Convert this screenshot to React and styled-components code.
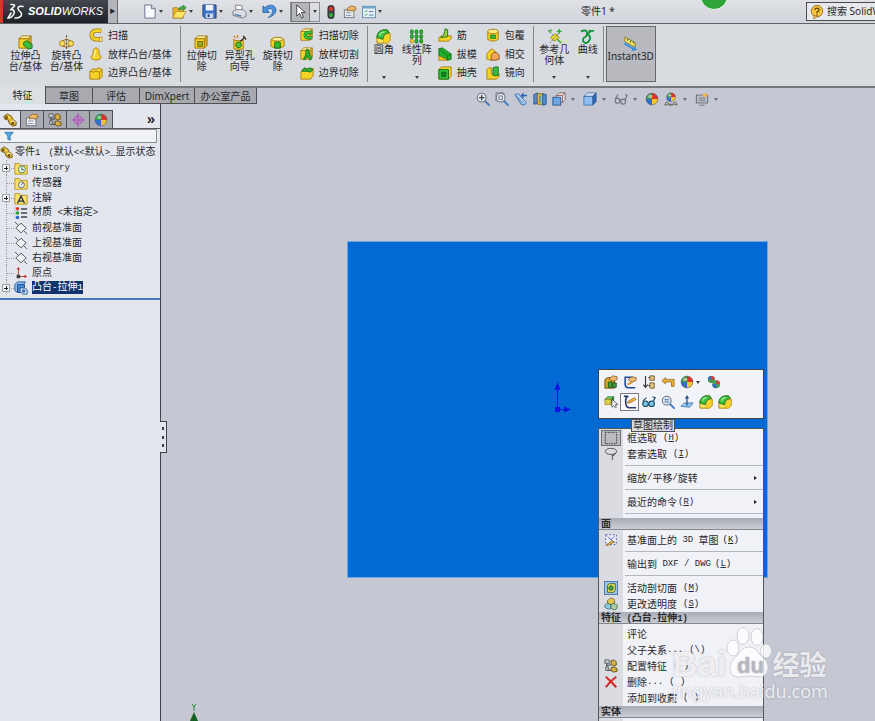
import React from 'react'
import styled, { createGlobalStyle, css } from 'styled-components'

const GlobalStyle = createGlobalStyle`
  * {
    box-sizing: border-box;
  }
  body {
    margin: 0;
    overflow: hidden;
    color: #26282c;
    font: 10px/11px "Noto Sans", "Noto Sans CJK SC", sans-serif;
  }
  button, input {
    margin: 0;
    padding: 0;
    border: 0;
    background: none;
    color: inherit;
    font: inherit;
  }
  ul {
    margin: 0;
    padding: 0;
    list-style: none;
  }
`

/* ---------- icons, all on a 16 x 16 grid ---------- */

const Y = '#f5d327'
const YD = '#a87a10'
const G = '#22b02c'
const GD = '#12701a'
const B = '#3f86cf'
const BD = '#20508f'

const box = (
  <g stroke={YD} strokeLinejoin="round">
    <path d="M1 4l3-3h10l-3 3z" fill="#fdf0a0" />
    <path d="M11 4l3-3v10l-3 3z" fill="#d9a81c" />
    <path d="M1 4h10v10H1z" fill={Y} />
  </g>
)
const ball = (
  <g>
    <path d="M8 8V1a7 7 0 0 0-7 7z" fill="#3d9a4a" />
    <path d="M8 8V1a7 7 0 0 1 7 7z" fill="#e0322c" />
    <path d="M8 8h7a7 7 0 0 1-7 7z" fill="#f1c531" />
    <path d="M8 8H1a7 7 0 0 0 7 7z" fill="#2f6fd0" />
    <circle cx="8" cy="8" r="6.7" fill="none" stroke="#5a5a60" strokeWidth=".7" />
    <ellipse cx="6" cy="5" rx="2.5" ry="1.8" fill="#fff" opacity=".5" />
  </g>
)
const lens = (
  <g>
    <path d="M10 10l5 5" stroke="#4b82bd" strokeWidth="2.4" strokeLinecap="round" />
    <circle cx="6.5" cy="6.5" r="5" fill="#dfe8f2" stroke="#6d7480" strokeWidth="1.2" />
  </g>
)
const folder = (
  <path d="M1 3h5l1 2h8v10H1z" fill="#fbe46a" stroke="#b58a1a" strokeLinejoin="round" />
)
const fillet = (
  <g strokeLinejoin="round">
    <path d="M1 8l4-6 3-1h4l3 4v7l-3 3H1z" fill="#fbe65c" stroke={YD} />
    <path d="M8 15V9l3-4h4v7l-3 3z" fill={Y} stroke="#c79c1c" strokeWidth=".7" />
    <path d="M1 9q0-7 7-8h4l2 3q-5 0-6 4l-1 3z" fill="#3cc441" stroke={GD} />
    <path d="M4 7q1-4 5-4" fill="none" stroke="#a5f09c" strokeWidth="1.300" />
  </g>
)
const plane = (
  <g fill="none" stroke="#4c4e55" strokeWidth="1">
    <path d="M8 2.500l6 5.500-6 5.500-6-5.500z" fill="#eef0f4" />
    <path d="M1 1l4 4M11 11l4 4" />
  </g>
)
const part = (
  <g stroke="#6d500b" strokeLinejoin="round">
    <path d="M1 4l4-3 5 3 1 3 4 3v4l-4 1-4-3-1-4-4-1z" fill="#e0b52c" />
    <path d="M5 4l3 1.500M9 10l3-1 2 2" stroke="#fff3a6" strokeWidth="1.400" />
    <circle cx="4" cy="5" r="1.300" fill="#7a5a0c" />
    <circle cx="11" cy="12" r="1.300" fill="#7a5a0c" />
  </g>
)
const hand = (
  <g>
    <rect x="1.500" y="5.500" width="11" height="9" fill="#e9ebef" stroke="#6d6f76" />
    <path d="M3.500 9h6M3.500 12h6" stroke="#7c8fb0" />
    <path d="M5 4l4-3 5 1 1 3-4 2-3-1-3 1z" fill="#eab765" stroke="#84531c" strokeWidth=".8" />
  </g>
)

const icons = {
  newDoc: (
    <g stroke="#66718a">
      <path d="M3 1h7l4 4v10H3z" fill="#f7faff" />
      <path d="M10 1v4h4" fill="#cfdcf0" />
    </g>
  ),
  open: (
    <g>
      <path d="M1 4h5l1 2h5v9H1z" fill="#e8b52c" stroke="#94690d" strokeWidth=".7" />
      <path d="M4 8h11l-4 7H1z" fill="#fde464" stroke="#a9801c" strokeWidth=".7" />
      <path d="M7 6q1-4 5-3V1l3 3-3 3V5q-2-1-3 1z" fill="#3cae3e" stroke={GD} strokeWidth=".6" />
    </g>
  ),
  save: (
    <g>
      <path d="M1 1h14v14H3l-2-2z" fill="#3c70c8" stroke="#1b3d7c" />
      <path d="M4 1h8v6H4z" fill="#eef3fb" />
      <path d="M4 10h8v5H4z" fill="#cfd8e8" />
      <path d="M6 11h2v3H6z" fill="#1b3d7c" />
    </g>
  ),
  print: (
    <g stroke="#63676f" strokeWidth=".8">
      <path d="M4 1l7 1-1 6-6-1z" fill="#fff" />
      <path d="M1 8l3-2h8l3 3v4l-4 2-10-3z" fill="#dcdee3" />
      <path d="M3 11l7 2" stroke="#3e7fc4" strokeWidth="1.500" />
    </g>
  ),
  undo: (
    <path
      d="M1 2v7h7L5.500 6.500Q10 3 11.500 7q.5 4-5 7.500Q15 12 15 6.500 14 0 7 1.500 5 2 3.500 4z"
      fill="#4a92dc"
      stroke="#205a9c"
      strokeWidth=".8"
    />
  ),
  cursor: <path d="M4 1v12l3-3 2 5 2-1-2-5h4z" fill="#fff" stroke="#3a3c42" />,
  traffic: (
    <g>
      <rect x="4.500" y=".5" width="7" height="15" rx="3" fill="#3f4146" stroke="#2a2b2e" />
      <circle cx="8" cy="4.500" r="2.400" fill="#e23328" />
      <circle cx="8" cy="11.500" r="2.400" fill="#2fae3a" />
    </g>
  ),
  hand,
  options: (
    <g>
      <rect x=".5" y="1.500" width="15" height="13" fill="#e6f0f8" stroke="#5d89ae" />
      <path d="M.5 3h15" stroke="#6ea4d0" strokeWidth="2" />
      <path d="M3 7l1 1 2-2M3 11l1 1 2-2" fill="none" stroke="#279137" />
      <path d="M8 7.500h5M8 11.500h5" stroke="#4f6f90" />
    </g>
  ),
  help: (
    <g>
      <circle cx="8" cy="7" r="6.500" fill="#f7c63a" stroke="#8e671a" />
      <path d="M5 12l-1 4 5-3z" fill="#f7c63a" stroke="#8e671a" strokeWidth=".7" />
      <path d="M5.500 5.500Q6 3.500 8 3.500t2.500 2Q10.500 7 8 8v1.500M8 10.500v1.500" fill="none" stroke="#5a3d08" strokeWidth="1.500" />
    </g>
  ),
  boss: (
    <g>
      {box}
      <path d="M6 8l3-2 6 4v4l-4 1-5-4z" fill="#41bd3e" stroke={GD} />
    </g>
  ),
  revolve: (
    <g fill="none" stroke={YD}>
      <path d="M8 0v16" stroke="#6f5a2a" strokeDasharray="3 1" />
      <ellipse cx="3.500" cy="9" rx="3" ry="3" fill="#f9dc62" />
      <ellipse cx="12.500" cy="9" rx="3" ry="3" fill="#f9dc62" />
      <path d="M4 6q4-3 8 0M4 12q4 2 8 0" stroke="#8d5c10" />
    </g>
  ),
  sweep: (
    <g fill="none">
      <path d="M14 3H8a5 5 0 0 0 0 10h6" stroke={YD} strokeWidth="5" />
      <path d="M13.500 3H8a5 5 0 0 0 0 10h5.500" stroke={Y} strokeWidth="3.200" />
      <path d="M12 10.500h3v5h-3z" fill="#fff1a0" stroke={YD} strokeWidth=".8" />
    </g>
  ),
  loft: (
    <g stroke={YD}>
      <path d="M5 3q3-4 6 0 0 6 3 9-2 3-6 3t-6-3q3-3 3-9z" fill={Y} />
      <path d="M7 3q0 6-2 9" stroke="#fff3a8" fill="none" strokeWidth="1.500" />
    </g>
  ),
  boundary: (
    <g stroke={YD} strokeLinejoin="round">
      <path d="M1 6l4-3 3 1 3-2 4 2v8l-3 3H1z" fill={Y} />
      <path d="M1 6l4 1 3-1 4 1 3-3M12 7v8" fill="none" />
    </g>
  ),
  cut: (
    <g>
      {box}
      <rect x="4" y="7" width="5" height="5" fill="#9aae1f" stroke="#6e6a10" />
    </g>
  ),
  hole: (
    <g>
      <path d="M2 6h10v9H2z" fill={Y} stroke={YD} />
      <circle cx="7" cy="10.500" r="3" fill="#57bd37" stroke={GD} />
      <path d="M9 7l5-5M12 1l3 4" stroke="#3b2d20" strokeWidth="1.500" />
      <path d="M2 1l2 2M6 0v3M1 5h2" stroke="#dc7b20" strokeWidth="1.400" />
    </g>
  ),
  revCut: (
    <g stroke={YD}>
      <path d="M1 5q7-5 14 0v7q-7 4-14 0z" fill={Y} />
      <path d="M5 14V8q3-3 6 0v6z" fill="#35b636" stroke={GD} />
      <ellipse cx="8" cy="4.500" rx="6" ry="2" fill="#fdf0a0" />
    </g>
  ),
  sweepCut: (
    <g>
      {box}
      <path d="M14 5H9a3 3 0 0 0 0 6h5" fill="none" stroke={GD} strokeWidth="4" />
      <path d="M14 5H9a3 3 0 0 0 0 6h5" fill="none" stroke="#3bc23e" strokeWidth="2.500" />
    </g>
  ),
  loftCut: (
    <g>
      {box}
      <path d="M4 14q3-4 3-11h3q0 7 4 9l-2 3q-3-2-4-5-1 3-2 4z" fill="#2db236" stroke={GD} />
    </g>
  ),
  boundCut: (
    <g stroke={YD} strokeLinejoin="round">
      <path d="M1 7l3-4h11v8l-3 4H1z" fill={Y} />
      <path d="M2 6l3-4 3 2 3-2 4 2-3 3-4-1z" fill="#2db236" stroke={GD} />
    </g>
  ),
  fillet,
  pattern: (
    <g strokeWidth=".8">
      {[1, 6, 11].map((x) => [1, 6, 11].map((y) => {
        const seed = x === 1 && y === 11
        return (
          <rect key={x + '-' + y} x={x + 0.5} y={y} width="3" height="4" rx="1" fill={seed ? Y : '#2fae38'} stroke={seed ? YD : GD} />
        )
      }))}
    </g>
  ),
  rib: (
    <g stroke={YD} strokeLinejoin="round">
      <path d="M1 11l3-2h11v3l-3 3H1z" fill={Y} />
      <path d="M8 1l3 1v8l-8 1q5-3 5-10z" fill="#a5cc30" stroke={GD} />
    </g>
  ),
  draft: (
    <g stroke={GD} strokeLinejoin="round">
      <path d="M1 2l4-1 10 7v6l-4 1L1 10z" fill={G} />
      <path d="M1 10l10 5H1z" fill={Y} stroke={YD} />
      <path d="M1 2l10 8v5M11 10l4-2" fill="none" />
    </g>
  ),
  shell: (
    <g stroke={GD}>
      <path d="M1 4l3-3h11v10l-3 4H1z" fill={Y} stroke={YD} />
      <path d="M1 4h11v11H1z" fill="#2fc238" />
      <path d="M4 7h5v5H4z" fill="#117c20" />
    </g>
  ),
  wrap: (
    <g stroke={YD}>
      <path d="M2 4v9q6 4 12 0V4z" fill={Y} />
      <ellipse cx="8" cy="4" rx="6" ry="2.500" fill="#f9ea80" />
      <path d="M5 8h6v4H5z" fill="#35b636" stroke={GD} strokeWidth=".7" />
    </g>
  ),
  intersect: (
    <g stroke={YD} strokeLinejoin="round">
      <path d="M1 8l5-6 5 3v8l-4 2-6-1z" fill={Y} />
      <path d="M6 9q4-6 9 0v5l-4 1H6z" fill="#f0a65c" stroke="#995016" />
    </g>
  ),
  mirror: (
    <g stroke={YD} strokeLinejoin="round">
      <path d="M1 4l2-2h3v7h9v3l-3 3H1z" fill={Y} />
      <path d="M8 2l3-1h3v10H8z" fill="#3db83c" stroke={GD} />
    </g>
  ),
  refGeo: (
    <g>
      <path d="M4 9l5-4 4 4-5 4z" fill="#f3da3c" stroke="#8c8215" />
      <path d="M1 1l5 5M3 15l11-12" stroke="#55705a" strokeDasharray="2 1" />
      <path d="M13 0v5M10.500 2.500h5M2 3l3-2M11 11l4 4" stroke={G} strokeWidth="1.500" />
    </g>
  ),
  curve: (
    <path
      d="M1 2.500Q7 0 7.500 4T4 9.500Q2 13 5 14.500T10 12 9.500 7 12 2M9 2h6"
      fill="none"
      stroke="#16923a"
      strokeWidth="2"
    />
  ),
  instant: (
    <g>
      <path d="M2 1l11 6v5L2 6z" fill="#f6e96a" stroke="#817a32" />
      <path d="M5 3v2M8 5v2M11 6v2" stroke="#4f4a20" />
      <path d="M1 9l9 5-1 2 6-1-3-4-1 1.500L2 7z" fill="#3b8fdf" />
    </g>
  ),
  zoomFit: (
    <g>
      {lens}
      <path d="M6.500 3.500v6M3.500 6.500h6" stroke="#3e434c" strokeWidth="1.400" />
    </g>
  ),
  zoomArea: (
    <g>
      <path d="M1 1h9v9H1z" fill="none" stroke="#555" strokeDasharray="2 1" />
      {lens}
      <path d="M4.500 4.500h4v4h-4z" fill="none" stroke="#6d7480" />
    </g>
  ),
  prevView: (
    <g>
      <path d="M1 3l4-1 9 10-2 3-4-1z" fill="#a8cbee" stroke="#3970ad" />
      <path d="M3 5l7 8" stroke="#3970ad" />
      <path d="M15 4H9M11 1.500L8.500 4 11 6.500" fill="none" stroke="#2d66ac" strokeWidth="1.500" />
    </g>
  ),
  section: (
    <g strokeLinejoin="round">
      <path d="M1 3l4-2v12l-4 1z" fill="#4f8fd0" stroke={BD} />
      <path d="M5 2h7v12H5z" fill="#d8bd4d" stroke="#81681c" />
      <path d="M11 2l4 1v11l-4 1z" fill="#4f8fd0" stroke={BD} />
      <path d="M7 4h2v8H7z" fill="#4f8fd0" />
    </g>
  ),
  orient: (
    <g strokeLinejoin="round">
      <path d="M5 4l3-3h7v8l-3 3H5z" fill="#e8e2e2" stroke="#7c6566" />
      <path d="M5 4h7l3-3M12 4v8" fill="none" stroke="#9b5758" />
      <path d="M1 6h9v9H1z" fill="#6ea8e2" stroke={BD} />
    </g>
  ),
  cube: (
    <g stroke={BD} strokeWidth=".7" strokeLinejoin="round">
      <path d="M1 5l4-4h10l-4 4z" fill="#cfe2f7" />
      <path d="M11 5l4-4v10l-4 4z" fill="#2f67b4" />
      <path d="M1 5h10v10H1z" fill="#8fbdf0" />
    </g>
  ),
  glasses: (
    <g fill="none" stroke="#6d727c" strokeWidth="1.300">
      <circle cx="4" cy="10" r="2.800" />
      <circle cx="10.500" cy="11" r="2.800" />
      <path d="M1.500 8l3-5M12.500 9l2.500-5-2-1" />
    </g>
  ),
  glassesBlue: (
    <g fill="#7cc6e4" stroke="#1d4c66" strokeWidth="1.300">
      <circle cx="4" cy="10" r="3.200" />
      <circle cx="11" cy="10" r="3.200" />
      <path d="M1 7l4-4M13 7l2-4-3-1" fill="none" />
    </g>
  ),
  ball,
  scene: (
    <g>
      <g transform="translate(2 0) scale(.75)">{ball}</g>
      <path d="M1 15l2-4 3 3h4l3-3 2 4-3-1-2 1H6l-2-1z" fill="#d9ddd4" stroke="#4a5a4a" />
    </g>
  ),
  viewSet: (
    <g>
      <rect x="1.500" y="3.500" width="13" height="9" fill="#bcc0c8" stroke="#5f636c" />
      <path d="M4 7h8M4 9.500h8M5 15h6" stroke="#6b6f78" />
      <path d="M8 4l4-3 3 2-3 3z" fill="#efb458" />
    </g>
  ),
  part,
  config: (
    <g>
      <path d="M3 1v12h6M3 7h5" fill="none" stroke="#55585f" strokeWidth="1.300" />
      <path d="M1 1h5v4H1zM2 9h3v4H2z" fill="#c8ccd3" stroke="#55585f" />
      <path d="M8 2l3-1 3 2v4l-3 1-3-2zM8 10l3-1 4 2v3l-4 1-3-2z" fill="#d6b044" stroke="#5e4a13" />
    </g>
  ),
  target: (
    <g fill="none" stroke="#b24fc4" strokeWidth="1.300">
      <circle cx="8" cy="8" r="4.500" />
      <path d="M8 0v16M0 8h16" />
      <circle cx="8" cy="8" r="1.500" fill="#d58be0" />
    </g>
  ),
  filter: <path d="M1 2h14l-5 6v7l-4-2V8z" fill="#58a5df" stroke="#1e6096" strokeLinejoin="round" />,
  history: (
    <g>
      {folder}
      <circle cx="9" cy="9.500" r="4" fill="#e9f4e6" stroke="#477a41" />
      <path d="M9 7v3h2.500" fill="none" stroke="#2b4a70" />
    </g>
  ),
  sensor: (
    <g>
      {folder}
      <circle cx="8.500" cy="10" r="3.500" fill="#e8edf3" stroke="#59616d" />
      <path d="M8.500 10l2-2" stroke="#333" />
    </g>
  ),
  note: (
    <g>
      {folder}
      <path d="M4 14L8 6l4 8M6 11.500h4.500" fill="none" stroke="#1d2d55" strokeWidth="1.500" />
    </g>
  ),
  material: (
    <g>
      <circle cx="4" cy="3" r="2" fill="#d33" />
      <circle cx="4" cy="8" r="2" fill="#2b9a3a" />
      <circle cx="4" cy="13" r="2" fill="#2b62c8" />
      <path d="M8 3.500h7M8 8h7M8 12.500h7" stroke="#44474d" strokeWidth="1.600" />
      <path d="M1 1v13" stroke="#9a9ca2" strokeDasharray="1 1" />
    </g>
  ),
  plane,
  origin: (
    <g fill="#b82a24" stroke="#b82a24">
      <path d="M5 12V3M5 12h8" />
      <path d="M5 1l2 3H3zM15 12l-3-2v4z" stroke="none" />
      <path d="M3 10h4v4H3z" fill="#3a3c42" stroke="none" />
    </g>
  ),
  feature: (
    <g stroke={BD} strokeLinejoin="round">
      <path d="M1 4l3-3h9l-2 3v9H4l-3-2z" fill="#8dbcee" />
      <path d="M4 4h8v9H4z" fill={B} />
      <path d="M7 8h5l3 2v5h-5l-3-3z" fill="#d9eafc" />
      <circle cx="11" cy="11.500" r="1.500" fill={B} />
    </g>
  ),
  editFeat: (
    <g>
      <path d="M1 5l3-2h8v12H1z" fill="#d4a526" stroke="#684d0c" />
      <path d="M6 4l4-3 5 1v3l-4 2-3-1z" fill="#efbd72" stroke="#7b4a17" strokeWidth=".8" />
      <path d="M5 8h4v6H5zM10 9h4v5h-4z" fill="#3da640" stroke="#1d5520" />
    </g>
  ),
  editSketch: (
    <g>
      <path d="M11 2.500H2.500v8q0 4 4 4H14" fill="none" stroke="#234a9f" strokeWidth="1.800" />
      <path d="M6 5l4-3 5 1v3l-4 2-3-1z" fill="#efbd72" stroke="#7b4a17" strokeWidth=".8" />
      <path d="M5 11l6-3" stroke="#e08f24" strokeWidth="2" />
    </g>
  ),
  reorder: (
    <g>
      <path d="M4 1v12M1.500 11L4 14l2.500-3" fill="none" stroke="#33353a" strokeWidth="1.300" />
      <path d="M9 1h5v5H9zM9 9h5v6H9z" fill="#e3c77c" stroke="#6f5522" />
      <path d="M7 3h2M7 12h2" stroke="#333" />
    </g>
  ),
  rollback: (
    <path d="M1 6.500l4-3.500v2h10v8h-3V8H5v2z" fill="#e9b13a" stroke="#875d12" strokeLinejoin="round" strokeWidth=".8" />
  ),
  appearances: (
    <g>
      <circle cx="5" cy="5" r="4" fill="#3d9a4a" />
      <path d="M5 5V1a4 4 0 0 0-4 4z" fill="#3568c5" />
      <path d="M5 5V1a4 4 0 0 1 4 4z" fill="#df3a33" />
      <circle cx="10.500" cy="10.500" r="4.500" fill="#3da45a" />
      <path d="M10.500 10.500V6a4.500 4.500 0 0 1 4.500 4.500z" fill="#d8413c" />
      <path d="M10.500 10.500H6a4.500 4.500 0 0 0 4.500 4.500z" fill="#3568c5" />
    </g>
  ),
  selOther: (
    <g>
      <path d="M1 5l3-3h7l-3 3z" fill="#7ad26c" stroke={GD} strokeWidth=".8" />
      <path d="M8 5l3-3v6l-3 3z" fill="#2f8f36" stroke={GD} strokeWidth=".8" />
      <path d="M1 5h7v6H1z" fill="#d9d04a" stroke={YD} strokeWidth=".8" />
      <path d="M9 5v9l2-2 2 3 1-1-1-3h3z" fill="#fff" stroke="#33353a" strokeWidth=".8" />
    </g>
  ),
  sketch: (
    <g>
      <path d="M1 1.500h5q-3 1-3 5 0 8 4 8h8" fill="none" stroke="#28366b" strokeWidth="1.800" />
      <path d="M5 9l1-2 7-4 2 2-7 4z" fill="#f5b63a" stroke="#7a4c12" strokeWidth=".7" />
    </g>
  ),
  zoomSel: (
    <g>
      {lens}
      <path d="M4 5.500h5M4 8h5" stroke="#3d6ea5" strokeWidth="1.200" />
    </g>
  ),
  normal: (
    <g>
      <path d="M1 13l4-4h10l-4 5z" fill="#8ec2ec" stroke="#2f6ca8" strokeWidth=".8" />
      <path d="M8 12V3" stroke="#22548f" strokeWidth="1.500" />
      <path d="M8 0l2.500 4h-5z" fill="#22548f" />
    </g>
  ),
  boxSel: (
    <rect x="1.500" y="1.500" width="13" height="13" fill="none" stroke="#333" strokeDasharray="2 1" />
  ),
  lasso: (
    <g fill="none" stroke="#4a4c52">
      <ellipse cx="8" cy="5" rx="6.500" ry="3.500" />
      <path d="M12 7q1 3-3 3 2 3 0 5M9 10l4-2" />
    </g>
  ),
  sketch3d: (
    <g>
      <path d="M2 2h12v11H2z" fill="#eef0fb" stroke="#3b4aa0" strokeDasharray="2 2" />
      <path d="M4 4l8 7M12 4l-5 4" stroke="#5566b8" />
      <path d="M2 14l7-5 3 1-7 4z" fill="#f0b93a" stroke="#7a4c12" strokeWidth=".7" />
    </g>
  ),
  liveSec: (
    <g>
      <rect x=".5" y=".5" width="15" height="15" fill="#9cc3ec" stroke="#4272a8" />
      <path d="M4 5l2-2h7v7l-2 3H4z" fill="#dfd558" stroke="#47682b" />
      <circle cx="8" cy="8" r="2.500" fill="#45a54a" stroke="#1d5c24" />
    </g>
  ),
  transp: (
    <g strokeWidth=".8">
      <path d="M4 4l4-3 4 2v4l-4 2-4-2z" fill="#e4c64c" stroke="#6f5a1b" />
      <path d="M1 9l3-2 4 2v4l-3 1-4-2z" fill="#8cc8dc" stroke="#316577" />
      <path d="M8 9l3-2 4 2v4l-3 2-4-2z" fill="#a9c9a5" stroke="#3b5f3b" />
    </g>
  ),
  del: <path d="M2 2q6 5 12 12M14 2Q7 7 2 14" fill="none" stroke="#d92a22" strokeWidth="2.400" />,
}

const Svg = styled.svg`
  display: block;
  flex: none;
  width: ${(p) => p.$size}px;
  height: ${(p) => p.$size}px;
`
const Icon = ({ name, size = 14 }) => (
  <Svg viewBox="0 0 16 16" $size={size} aria-hidden="true">{icons[name]}</Svg>
)

/* ---------- shared parts ---------- */

const Screen = styled.div`
  display: flex;
  flex-direction: column;
  height: 100vh;
  overflow: hidden;
  background: #c5c8d3;
`
const Caret = styled.i`
  flex: none;
  width: 0;
  border: 2px solid transparent;
  border-top: 3px solid #3c3e44;
  border-bottom: 0;
`
const IconButton = styled.button`
  display: flex;
  align-items: center;
  justify-content: center;
  flex: none;
  width: ${(p) => p.$w || 19}px;
  height: 18px;
  ${(p) => p.$boxed && css`
    border: 1px solid #77797f;
    background: ${p.$boxed};
  `}
`
// half-width latin next to full-width hanzi
const Mono = styled.span`
  font-family: "Liberation Mono", monospace;
  font-size: 9px;
  line-height: 11px;
  white-space: pre;
`
const Mixed = ({ text }) =>
  text.split(/([\x20-\x7e]+)/).map((s, i) => (i % 2 ? <Mono key={i}>{s}</Mono> : s))

/* ---------- title bar ---------- */

const TitleBar = styled.header`
  position: relative;
  display: flex;
  align-items: center;
  flex: none;
  height: 24px;
  border-bottom: 1px solid #606268;
  background: linear-gradient(#dfe1e6, #d1d4da);
`
const Logo = styled.div`
  display: flex;
  align-items: center;
  gap: 4px;
  width: 108px;
  height: 23px;
  padding-left: 4px;
  border-left: 3px solid #d8352b;
  background: linear-gradient(#44484e, #1c2127);
  color: #fff;
  font: italic 11px/23px "Liberation Sans", sans-serif;
  svg {
    width: 17px;
    height: 17px;
  }
`
const LogoArrow = styled.button`
  width: 10px;
  height: 23px;
  margin-right: 22px;
  border-right: 1px solid #6a6c72;
  background: #b3b5ba;
  font-size: 6px;
`
const QuickTools = styled.div`
  display: flex;
  align-items: center;
`
const Split = styled.div`
  display: flex;
  align-items: center;
  width: 30px;
  ${(p) => p.$boxed && css`
    height: 20px;
    margin-right: 1px;
    border: 1px solid #8b8d92;
    button {
      margin-right: 3px;
      height: 20px;
    }
  `}
`
const DocName = styled.span`
  margin-left: 192px;
  white-space: nowrap;
`
const GreenDot = styled.div`
  position: absolute;
  top: -18px;
  left: 700px;
  width: 28px;
  height: 28px;
  border: 1px solid #e8f4e6;
  border-radius: 50%;
  background: #2fa43a;
`
const Search = styled.label`
  display: flex;
  align-items: center;
  gap: 3px;
  width: 69px;
  height: 19px;
  margin-left: auto;
  padding-left: 3px;
  border: 1px solid #4a4c52;
  border-right: 0;
  background: #e6e8ec;
  input {
    flex: 1;
    min-width: 0;
  }
`

/* ---------- ribbon ---------- */

const Ribbon = styled.div`
  display: flex;
  flex: none;
  height: 64px;
  padding: 2px 0 4px 5px;
  border-bottom: 2px solid #74767d;
  background: #d8dbe0;
`
const Group = styled.section`
  display: flex;
  padding-right: ${(p) => p.$pad || 0}px;
  margin-right: 2px;
  border-right: 1px solid #85878d;
`
const BigButton = styled.button`
  display: flex;
  flex-direction: column;
  align-items: center;
  width: ${(p) => p.$w}px;
  padding-top: ${(p) => (p.$menu ? 3 : 9)}px;
  white-space: pre;
  ${(p) => p.$active && css`
    border: 1px solid #66686e;
    background: #b8babf;
  `}
  i {
    margin: auto 0 3px;
  }
`
const Column = styled.div`
  display: flex;
  flex-direction: column;
  padding-left: ${(p) => p.$left || 0}px;
`
const SmallButton = styled.button`
  display: flex;
  align-items: center;
  gap: 5px;
  height: 19px;
  white-space: nowrap;
`

const Big = ({ icon, label, w, menu, active }) => (
  <BigButton $w={w} $menu={menu} $active={active}>
    <Icon name={icon} size={15} />
    {label}
    {menu && <Caret />}
  </BigButton>
)
const Smalls = ({ items, left }) => (
  <Column $left={left}>
    {items.map(([icon, label]) => (
      <SmallButton key={label}><Icon name={icon} />{label}</SmallButton>
    ))}
  </Column>
)

/* ---------- command tabs + heads-up toolbar ---------- */

const TabRow = styled.div`
  display: flex;
  flex: none;
  height: 16px;
`
const Tabs = styled.nav`
  display: flex;
  flex: none;
`
const Tab = styled.button`
  width: ${(p) => p.$w}px;
  border: solid #4d4f55;
  border-width: 0 1px 1px 0;
  background: #a8aab0;
  line-height: 14px;
  ${(p) => p.$active && css`
    margin-top: -2px;
    border-bottom: 0;
    background: #dcdfe4;
  `}
`
const HeadsUp = styled.div`
  display: flex;
  align-items: center;
  height: 22px;
  margin-left: 216px;
  i {
    margin: 0 5px 0 3px;
    border-top-color: #666a75;
  }
`

/* ---------- feature tree ---------- */

const Main = styled.main`
  display: flex;
  flex: 1;
  min-height: 0;
`
const Panel = styled.aside`
  position: relative;
  flex: none;
  width: 161px;
  border-right: 1px solid #404248;
  background: #e3e6ec;
`
const PanelTabs = styled.div`
  display: flex;
  height: 25px;
  padding-top: 6px;
  border-bottom: 1px solid #55575d;
`
const PanelTab = styled.button`
  display: flex;
  align-items: center;
  justify-content: center;
  width: ${(p) => p.$w || 23}px;
  border: solid #4d4f55;
  border-width: 1px 1px 0 0;
  background: ${(p) => (p.$active ? '#e3e6ec' : '#a9abb2')};
`
const More = styled.button`
  margin-left: auto;
  padding-right: 5px;
  font: bold 15px/14px "Liberation Sans", sans-serif;
`
const FilterBox = styled.label`
  display: flex;
  align-items: center;
  height: 14px;
  margin-right: 3px;
  padding-left: 4px;
  border: 1px solid #8b8d93;
  border-left: 0;
  background: #f1f2f4;
  input {
    flex: 1;
    min-width: 0;
    height: 12px;
  }
`
const Tree = styled.ul`
  padding: 2px 0 3px;
  border-bottom: 2px solid #4779b5;
`
const TreeRow = styled.li`
  display: flex;
  align-items: center;
  gap: ${(p) => (p.$root ? 2 : 4)}px;
  height: 15px;
  white-space: nowrap;
`
const Branch = styled.svg`
  flex: none;
  width: 14px;
  height: 15px;
  margin-right: -4px;
`
const NodeName = styled.span`
  ${(p) => p.$selected && css`
    background: #12326e;
    color: #fff;
  `}
`
const State = styled.span`
  margin-left: 6px;
`
const Handle = styled.button`
  position: absolute;
  top: 317px;
  right: -7px;
  display: flex;
  flex-direction: column;
  align-items: center;
  justify-content: space-evenly;
  width: 7px;
  height: 32px;
  border: solid #404248;
  border-width: 1px 1px 1px 0;
  background: #e3e6ec;
  i {
    width: 2px;
    height: 3px;
    background: #404248;
  }
`

const nodes = [
  ['history', 'History', true],
  ['sensor', '传感器'],
  ['note', '注解', true],
  ['material', '材质 <未指定>'],
  ['plane', '前视基准面'],
  ['plane', '上视基准面'],
  ['plane', '右视基准面'],
  ['origin', '原点'],
  ['feature', '凸台-拉伸1', true, true],
]

/* ---------- graphics area ---------- */

const Viewport = styled.div`
  position: relative;
  flex: 1;
  overflow: hidden;
`
const Face = styled.div`
  position: absolute;
  top: 137px;
  left: 186px;
  width: 421px;
  height: 337px;
  border: 1px solid #6ba6e2;
  background: #036ad3;
`
const Triad = styled.svg`
  position: absolute;
  top: 276px;
  left: 388px;
  width: 24px;
  height: 36px;
`
const AxisY = styled.svg`
  position: absolute;
  bottom: 0;
  left: 27px;
  width: 12px;
  height: 17px;
`
const Context = styled.div`
  position: absolute;
  top: 265px;
  left: 437px;
  width: 166px;
`
const ContextBar = styled.div`
  height: 50px;
  padding: 2px;
  border: 1px solid #3e424c;
  background: #f2f2f9;
`
const BarRow = styled.div`
  display: flex;
  align-items: center;
  height: 20px;
  i {
    margin: 0 4px 0 0;
  }
`
const Tip = styled.div`
  position: absolute;
  z-index: 1;
  top: 50px;
  left: 33px;
  height: 13px;
  padding: 0 1px;
  border: 1px solid #4f5157;
  background: #d8dade;
`
const Menu = styled.div`
  display: flex;
  flex-direction: column;
  margin-top: 9px;
  padding-top: 1px;
  border: 1px solid #54565d;
  background: linear-gradient(90deg, #dadce2 24px, #f1f1f8 24px);
`
const Item = styled.button`
  display: flex;
  align-items: center;
  height: 16px;
  text-align: left;
  white-space: nowrap;
`
const Gutter = styled.span`
  display: flex;
  justify-content: center;
  flex: none;
  width: 24px;
  margin-right: 4px;
  svg {
    box-sizing: content-box;
    ${(p) => p.$on && css`
      padding: 0 2px;
      border: 1px solid #6d6f75;
      background: #b9bbc1;
    `}
  }
`
const Key = styled(Mono)`
  margin-left: ${(p) => p.$gap}px;
`
const Arrow = styled.i`
  margin: 0 6px 0 auto;
  border: 2px solid transparent;
  border-left: 3px solid #222;
  border-right: 0;
`
const Rule = styled.hr`
  width: calc(100% - 26px);
  height: 1px;
  margin: 3px 0 4px 26px;
  border: 0;
  background: #b4b6bd;
`
const Heading = styled.h2`
  height: 12px;
  margin: 0 0 2px;
  padding-left: 2px;
  border-bottom: 1px solid #85878e;
  background: linear-gradient(#a9abb4, #cccdd5);
  font-size: 10px;
  line-height: 11px;
`

const menu = [
  { label: '框选取', k: 'H', icon: 'boxSel', on: true, gap: 6 },
  { label: '套索选取', k: 'I', icon: 'lasso', gap: 6 },
  { rule: true },
  { label: '缩放/平移/旋转', arrow: true },
  { rule: true },
  { label: '最近的命令', k: 'R', arrow: true, gap: 1 },
  { rule: true },
  { head: '面' },
  { label: '基准面上的 3D 草图', k: 'K', icon: 'sketch3d', gap: 4 },
  { rule: true },
  { label: '输出到 DXF / DWG', k: 'L', gap: 4 },
  { rule: true },
  { label: '活动剖切面', k: 'M', icon: 'liveSec', gap: 6 },
  { label: '更改透明度', k: 'S', icon: 'transp', gap: 6 },
  { head: '特征 (凸台-拉伸1)' },
  { label: '评论' },
  { label: '父子关系...', k: '\\', gap: 6 },
  { label: '配置特征', k: ' ', icon: 'config', gap: 6 },
  { label: '删除...', k: ' ', icon: 'del', gap: 6 },
  { label: '添加到收藏', k: ' ', gap: 6 },
  { head: '实体' },
  { label: '' },
]

const MenuEntry = ({ rule, head, label, k, icon, on, gap, arrow }) => {
  if (rule) return <Rule />
  if (head) return <Heading><Mixed text={head} /></Heading>
  return (
    <Item>
      <Gutter $on={on}>{icon && <Icon name={icon} />}</Gutter>
      <Mixed text={label} />
      {k && <Key $gap={gap}>({k === ' ' || k === '\\' ? k : <u>{k}</u>})</Key>}
      {arrow && <Arrow />}
    </Item>
  )
}

const Watermark = styled.div`
  position: absolute;
  top: 522px;
  left: 511px;
  color: rgba(255, 255, 255, 0.8);
  text-shadow: 0 0 2px rgba(110, 112, 122, 0.5);
  pointer-events: none;
`
const Brand = styled.div`
  display: flex;
  align-items: flex-end;
  height: 54px;
  font: bold 35px/32px "Liberation Sans", sans-serif;
  svg {
    width: 46px;
    height: 54px;
  }
`
const BrandCn = styled.span`
  font: bold 27px/32px "Noto Sans CJK SC", sans-serif;
`
const Url = styled.div`
  font: 18px/22px "Noto Sans", sans-serif;
`

export default function App() {
  return (
    <Screen>
      <GlobalStyle />
      <TitleBar>
        <Logo>
          <svg viewBox="0 0 17 17" fill="none" stroke="#fff" strokeWidth="1.500" strokeLinecap="round">
            <path d="M4 1.500q5-.5 3 2L4 6.500q4 0 3 4Q5 15 1 15l3-5M16 3.500q-5-1-5 2 0 1.500 2 3 2.500 2 1 4.500-2 2.500-6 2" />
          </svg>
          <span><b>SOLID</b>WORKS</span>
        </Logo>
        <LogoArrow aria-label="菜单">▶</LogoArrow>
        <QuickTools>
          {['newDoc', 'open', 'save', 'print', 'undo'].map((n) => (
            <Split key={n}><IconButton aria-label={n}><Icon name={n} size={15} /></IconButton><Caret /></Split>
          ))}
          <Split $boxed>
            <IconButton aria-label="选择" $boxed="#b4b6bb"><Icon name="cursor" size={15} /></IconButton>
            <Caret />
          </Split>
          <IconButton aria-label="重建"><Icon name="traffic" /></IconButton>
          <IconButton aria-label="属性"><Icon name="hand" /></IconButton>
          <Split><IconButton aria-label="选项"><Icon name="options" /></IconButton><Caret /></Split>
        </QuickTools>
        <DocName>零件1 *</DocName>
        <GreenDot />
        <Search>
          <Icon name="help" />
          <input aria-label="搜索" defaultValue="搜索 SolidW" />
        </Search>
      </TitleBar>

      <Ribbon>
        <Group $pad={8}>
          <Big icon="boss" label={'拉伸凸\n台/基体'} w={41} />
          <Big icon="revolve" label={'旋转凸\n台/基体'} w={41} />
          <Smalls left={2} items={[['sweep', '扫描'], ['loft', '放样凸台/基体'], ['boundary', '边界凸台/基体']]} />
        </Group>
        <Group $pad={8}>
          <Big icon="cut" label={'拉伸切\n除'} w={38} />
          <Big icon="hole" label={'异型孔\n向导'} w={38} />
          <Big icon="revCut" label={'旋转切\n除'} w={38} />
          <Smalls left={3} items={[['sweepCut', '扫描切除'], ['loftCut', '放样切割'], ['boundCut', '边界切除']]} />
        </Group>
        <Group $pad={8}>
          <Big icon="fillet" label="圆角" w={28} menu />
          <Big icon="pattern" label={'线性阵\n列'} w={38} menu />
          <Smalls left={2} items={[['rib', '筋'], ['draft', '拔模'], ['shell', '抽壳']]} />
          <Smalls left={9} items={[['wrap', '包覆'], ['intersect', '相交'], ['mirror', '镜向']]} />
        </Group>
        <Group>
          <Big icon="refGeo" label={'参考几\n何体'} w={37} menu />
          <Big icon="curve" label="曲线" w={30} menu />
        </Group>
        <Big icon="instant" label="Instant3D" w={50} active />
      </Ribbon>

      <TabRow>
        <Tabs>
          <Tab $w={46} $active>特征</Tab>
          <Tab $w={47}>草图</Tab>
          <Tab $w={47}>评估</Tab>
          <Tab $w={55}>DimXpert</Tab>
          <Tab $w={62}>办公室产品</Tab>
        </Tabs>
        <HeadsUp>
          {[['zoomFit'], ['zoomArea'], ['prevView'], ['section'], ['orient', 1], ['cube', 1], ['glasses', 1], ['ball'], ['scene', 1], ['viewSet', 1]].map(([n, caret]) => (
            <React.Fragment key={n}>
              <IconButton aria-label={n}><Icon name={n} /></IconButton>
              {caret && <Caret />}
            </React.Fragment>
          ))}
        </HeadsUp>
      </TabRow>

      <Main>
        <Panel>
          <PanelTabs>
            <PanelTab aria-label="特征树" $w={21} $active><Icon name="part" /></PanelTab>
            {['hand', 'config', 'target', 'ball'].map((n) => (
              <PanelTab key={n} aria-label={n}><Icon name={n} /></PanelTab>
            ))}
            <More>»</More>
          </PanelTabs>
          <FilterBox><Icon name="filter" size={10} /><input aria-label="过滤" /></FilterBox>
          <Tree>
            <TreeRow $root>
              <Icon name="part" size={13} />
              <span>零件<Mono>1</Mono></span>
              <State><Mixed text="(默认<<默认>_显示状态" /></State>
            </TreeRow>
            {nodes.map(([icon, label, expand, selected]) => (
              <TreeRow key={label}>
                <Branch viewBox="0 0 14 15" fill="none" stroke="#9a9ca4">
                  <path d="M6.500 0v15M7 8.500h7" strokeDasharray="1 1" />
                  {expand && <path d="M2.500 4.500h7v7h-7z" fill="#f4f5f7" />}
                  {expand && <path d="M4 8.500h4M6.500 6v4" stroke="#222" />}
                </Branch>
                <Icon name={icon} />
                <NodeName $selected={selected}><Mixed text={label} /></NodeName>
              </TreeRow>
            ))}
          </Tree>
          <Handle aria-label="折叠"><i /><i /><i /></Handle>
        </Panel>

        <Viewport>
          <Face />
          <Triad viewBox="0 0 24 36" fill="#1414e0" stroke="#1414e0">
            <path d="M8.500 30V8M9 29.500h8" />
            <path d="M8.500 2l3 8h-6zM22 29.500l-7-3v6zM6 27h5v5H6z" stroke="none" />
          </Triad>
          <AxisY viewBox="0 0 12 17">
            <path d="M4 0l2 3 2-3M6 3v4" fill="none" stroke="#278a3c" />
            <path d="M6 8l4 9H2z" fill="#145f22" />
          </AxisY>
          <Context>
            <ContextBar>
              <BarRow>
                {['editFeat', 'editSketch', 'reorder', 'rollback', 'ball'].map((n) => (
                  <IconButton key={n} aria-label={n}><Icon name={n} /></IconButton>
                ))}
                <Caret />
                <IconButton aria-label="外观"><Icon name="appearances" /></IconButton>
              </BarRow>
              <BarRow>
                <IconButton aria-label="选择其他"><Icon name="selOther" /></IconButton>
                <IconButton aria-label="草图绘制" $boxed="#f8f8fb"><Icon name="sketch" /></IconButton>
                {['glassesBlue', 'zoomSel', 'normal'].map((n) => (
                  <IconButton key={n} aria-label={n}><Icon name={n} /></IconButton>
                ))}
                <IconButton aria-label="圆角"><Icon name="fillet" /></IconButton>
                <IconButton aria-label="倒角"><Icon name="fillet" /></IconButton>
              </BarRow>
            </ContextBar>
            <Tip>草图绘制</Tip>
            <Menu>
              {menu.map((m, i) => <MenuEntry key={i} {...m} />)}
            </Menu>
          </Context>
          <Watermark>
            <Brand>
              Bai
              <svg viewBox="0 0 46 54" fill="currentColor" stroke="#b4b7c0" strokeWidth=".6">
                <ellipse cx="7" cy="22" rx="6" ry="8" />
                <ellipse cx="17" cy="10" rx="6" ry="8.500" />
                <ellipse cx="31" cy="11" rx="6" ry="8.500" />
                <ellipse cx="40" cy="25" rx="5.500" ry="7" />
                <path d="M23 21q7 0 11 8 9 6 8 14-2 9-10 8-9-2-18 0-9 1-10-8 0-8 8-14 4-8 11-8z" />
                <text x="11" y="47" fill="#b4b7c0" stroke="none" fontSize="22" fontWeight="bold" fontFamily="Liberation Sans">du</text>
              </svg>
              <BrandCn>经验</BrandCn>
            </Brand>
            <Url>jingyan.baidu.com</Url>
          </Watermark>
        </Viewport>
      </Main>
    </Screen>
  )
}
